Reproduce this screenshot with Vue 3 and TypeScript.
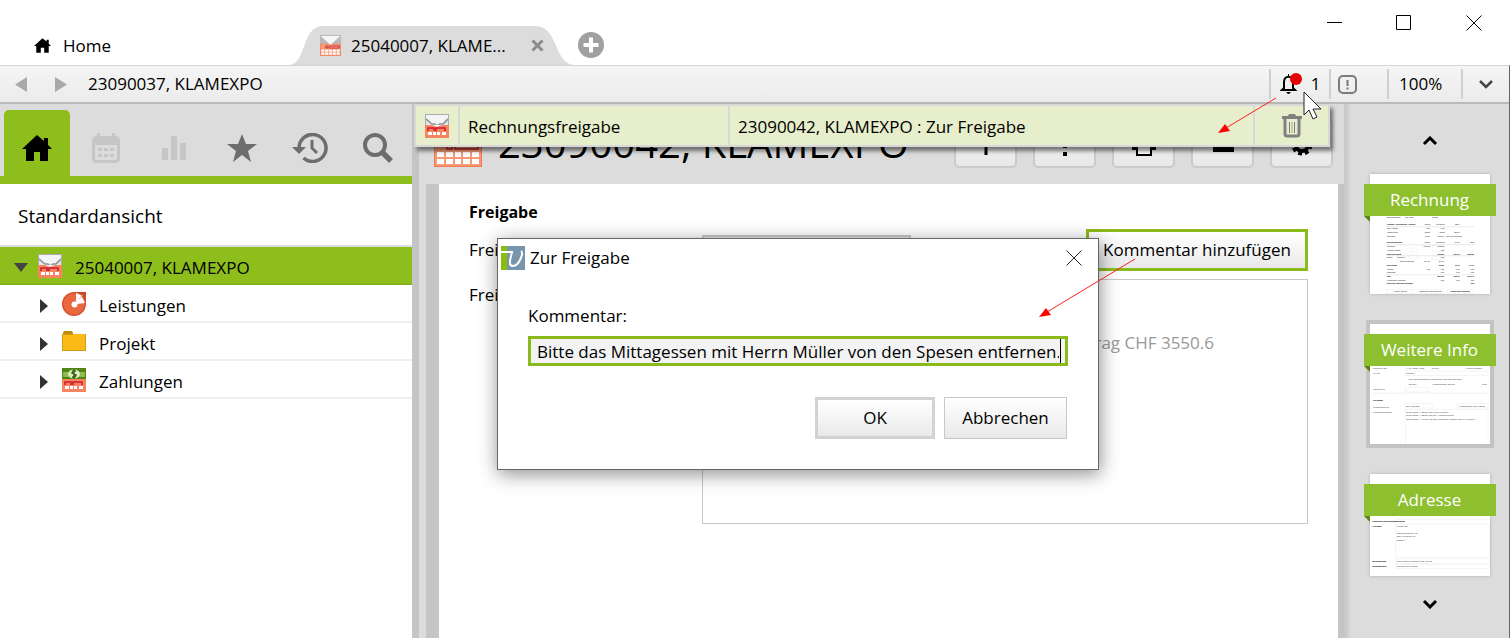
<script setup lang="ts">
import { ref } from 'vue'

interface Mark { x: number; y: number; t: string; b?: boolean; e?: boolean }
interface Thumb { title: string; active?: boolean; cut?: boolean; dense?: boolean; marks: Mark[]; boxes: number[][] }

const comment = ref('Bitte das Mittagessen mit Herrn Müller von den Spesen entfernen.')
const protocol = ref(
  '22.09.2023 11:38:56 (rw) Unterzeichnet\n22.09.2023 11:38:58 (rw) Off. Ausschreibung\n22.09.2023 11:40:36 (rw) [Zur Freigabe]: Totalbetrag CHF 3550.6'
)

const tree = [
  { name: 'Leistungen', icon: 'pie' },
  { name: 'Projekt', icon: 'folder' },
  { name: 'Zahlungen', icon: 'money' },
]

const thumbs: Thumb[] = [
  {
    title: 'Rechnung',
    dense: true,
    marks: [
      { x: 50, y: 133, t: 'Rechnungsdatum' }, { x: 105, y: 133, t: '30.01.2025' }, { x: 186, y: 133, t: 'Periode' },
      { x: 50, y: 154, t: 'Aufwand / Verrechenbar / Honorar', b: true }, { x: 180, y: 154, t: 'Datum', e: true }, { x: 224, y: 154, t: 'Verrechnet', e: true }, { x: 268, y: 154, t: 'Offen', e: true },
      { x: 50, y: 166, t: 'Total Aufwand' }, { x: 180, y: 166, t: '10.00', e: true }, { x: 224, y: 166, t: '10.00', e: true },
      { x: 50, y: 176, t: 'Honorar netto' }, { x: 180, y: 176, t: '300.00', e: true }, { x: 224, y: 176, t: '300.00', e: true }, { x: 268, y: 176, t: '300.00', e: true },
      { x: 50, y: 188, t: 'Noch offen' }, { x: 180, y: 188, t: '770.00', e: true }, { x: 202, y: 188, t: 'Honorar = 100% von Noch offen' },
      { x: 50, y: 208, t: 'Rechnungsbeträge', b: true }, { x: 180, y: 208, t: 'Datum', e: true }, { x: 224, y: 208, t: 'Verrechnet', e: true }, { x: 268, y: 208, t: 'MWST', e: true }, { x: 312, y: 208, t: 'Total', e: true },
      { x: 50, y: 220, t: 'Leistungen' }, { x: 180, y: 220, t: '17650.00', e: true }, { x: 222, y: 220, t: '17650.00', e: true },
      { x: 50, y: 230, t: '% Rabatt   Honorar' }, { x: 222, y: 230, t: '0.00', e: true },
      { x: 50, y: 242, t: 'Total nach Rabatt', b: true }, { x: 222, y: 242, t: '17650.00', b: true, e: true }, { x: 268, y: 242, t: '1359.05', b: true, e: true }, { x: 312, y: 242, t: '19009.05', b: true, e: true },
      { x: 50, y: 253, t: 'Spesen' }, { x: 80, y: 253, t: 'Kontrolle %' }, { x: 222, y: 253, t: '0.00', e: true },
      { x: 90, y: 264, t: 'Belege verwenden' }, { x: 178, y: 264, t: '384.50', e: true }, { x: 222, y: 264, t: '384.50', e: true },
      { x: 50, y: 275, t: 'Total Spesen', b: true }, { x: 222, y: 275, t: '384.50', b: true, e: true }, { x: 268, y: 275, t: '29.60', b: true, e: true }, { x: 312, y: 275, t: '414.10', b: true, e: true },
      { x: 50, y: 287, t: 'Auslagen' }, { x: 180, y: 287, t: '0.00', e: true }, { x: 222, y: 287, t: '0.00', e: true }, { x: 268, y: 287, t: '0.00', e: true }, { x: 312, y: 287, t: '0.00', e: true },
      { x: 50, y: 298, t: 'Vorschüsse' }, { x: 222, y: 298, t: '0.00', e: true }, { x: 268, y: 298, t: '0.00', e: true }, { x: 312, y: 298, t: '0.00', e: true },
      { x: 50, y: 310, t: 'Total', b: true }, { x: 222, y: 310, t: '18034.50', b: true, e: true }, { x: 268, y: 310, t: '1388.65', b: true, e: true }, { x: 312, y: 310, t: '19423.15', b: true, e: true },
      { x: 50, y: 321, t: '% Rückbehalt Vorschuss' }, { x: 222, y: 321, t: '0.00', e: true }, { x: 268, y: 321, t: '0.00', e: true }, { x: 312, y: 321, t: '0.00', e: true },
      { x: 50, y: 331, t: 'Total nach Abschluss (gerundet)', b: true }, { x: 312, y: 331, t: '0.00', b: true, e: true },
      { x: 72, y: 355, t: 'Manuell drucken' }, { x: 148, y: 355, t: 'Empfänger/Anteile einstellen' }, { x: 240, y: 355, t: 'Ausstehende Zahlungen', b: true },
    ],
    boxes: [[50, 158, 262, 1], [50, 212, 262, 1], [50, 245, 262, 1], [50, 302, 262, 1], [50, 347, 80, 12], [141, 347, 80, 12], [231, 347, 80, 12], [120, 222, 22, 10], [186, 214, 38, 18], [120, 245, 22, 10], [186, 246, 38, 10]],
  },
  {
    title: 'Weitere Info',
    active: true,
    marks: [
      { x: 9, y: 136, t: 'Gedruckt am' }, { x: 108, y: 136, t: '14.01.2025 13:36' }, { x: 186, y: 136, t: 'Durch' }, { x: 286, y: 136, t: 'Werner Schmid' },
      { x: 9, y: 151, t: 'MWST' }, { x: 108, y: 151, t: 'Normal' },
      { x: 116, y: 168, t: 'Exklusive Rechnung (kann nicht gebucht werden)' },
      { x: 116, y: 184, t: 'Bezahlt' }, { x: 186, y: 184, t: 'Ausstehender Betrag' }, { x: 350, y: 184, t: '0.00', e: true },
      { x: 9, y: 199, t: 'Mahnstufe' },
      { x: 9, y: 232, t: 'Freigabe', b: true },
      { x: 9, y: 251, t: 'Freigabestatus' }, { x: 108, y: 250, t: 'Zur Freigabe' }, { x: 268, y: 250, t: 'Kommentar hinzufügen' },
      { x: 9, y: 268, t: 'Freigabeprotokoll' }, { x: 108, y: 267, t: '22.09.2023 11:38:56 (rw) Unterzeichnet' },
      { x: 108, y: 277, t: '22.09.2023 11:38:58 (rw) Off. Ausschreibung' }, { x: 108, y: 287, t: '22.09.2023 11:40:36 (rw) [Zur Freigabe]: Totalbetrag CHF 3550.6' },
    ],
    boxes: [[106, 141, 248, 13], [106, 191, 70, 13], [9, 207, 345, 2], [106, 238, 84, 14], [262, 238, 92, 14], [106, 257, 248, 110]],
  },
  {
    title: 'Adresse',
    cut: true,
    marks: [
      { x: 7, y: 145, t: 'Effektive Rechnungsadresse', b: true },
      { x: 7, y: 160, t: 'Adresse', b: true }, { x: 80, y: 160, t: 'Klamexpo' },
      { x: 80, y: 180, t: 'Schaffhauserstr. 35' }, { x: 80, y: 190, t: '8021 Neustadt SH' }, { x: 80, y: 200, t: 'Schweiz' },
      { x: 7, y: 264, t: 'Briefanrede', b: true }, { x: 80, y: 264, t: 'Sehr geehrte Damen und Herren' },
      { x: 7, y: 280, t: 'Grussformel', b: true }, { x: 80, y: 280, t: 'Freundliche Grüsse' },
    ],
    boxes: [[76, 136, 282, 1], [76, 150, 282, 101], [76, 255, 282, 13], [76, 271, 282, 12]],
  },
]
</script>

<template>
  <div class="window">
    <!-- shared icon shapes -->
    <svg class="defs" aria-hidden="true">
      <defs>
        <linearGradient id="silver" x1="0" y1="0" x2="0" y2="1">
          <stop offset="0" stop-color="#b9bcc0" /><stop offset="1" stop-color="#f0f0f2" />
        </linearGradient>
        <symbol id="house" viewBox="0 0 30 26">
          <path d="M15 0 22 6V3h4v7l4 4h-4v12h-8v-9h-6v9H4V14H0z" />
        </symbol>
        <symbol id="invoice" viewBox="0 0 24 24">
          <rect width="24" height="12" fill="url(#silver)" />
          <path d="M1 4l8 7h6l8-7V1H1z" fill="#f4f4f6" />
          <path d="M1 5l6 5h3l2 2 3-2h3l5-5" fill="none" stroke="#909498" stroke-width="1.600" />
          <path d="M.5 12V.5h23V12" fill="none" stroke="#aaadb0" />
          <rect y="11" width="24" height="13" fill="#f58560" />
          <path d="M7 11h10l-5 2z" fill="#f4f4f6" />
          <path d="M3 17v-3h6v3M11 17v-3h9v3" fill="none" stroke="#d01b2e" stroke-width="1.600" />
          <path d="M3 18h4v3H3zM8 18h3v3H8zM12 18h3v3h-3zM17 18h4v3h-4z" fill="#fff" />
        </symbol>
        <symbol id="calc" viewBox="0 0 48 48">
          <rect width="48" height="24" fill="#b8babd" />
          <rect y="20" width="48" height="28" fill="#f2784e" /><rect x="1" y="21" width="46" height="26" fill="#f59a75" />
          <path d="M2 2h44L24 23z" fill="#f7f7f7" />
          <path d="M13 25h5v5h-5zM21 25h23v5H21z" fill="#ef8f79" stroke="#c8202f" stroke-width="1.600" />
          <path d="M3 33h7v5H3zM12 33h7v5h-7zM21 33h6v5h-6zM29 33h7v5h-7zM38 33h7v5h-7zM3 40h7v5H3zM12 40h7v5h-7zM21 40h6v5h-6zM29 40h7v5h-7zM38 40h7v5h-7z" fill="#fff" />
        </symbol>
        <symbol id="pie" viewBox="0 0 24 24">
          <path d="M12 0h12v12z" fill="#c94a28" />
          <circle cx="12" cy="12" r="12" fill="#d9532f" /><circle cx="12" cy="12" r="10.500" fill="#e9683f" />
          <path d="M14 1l5 2 4 8-8 1-1-3z" fill="#fff" /><path d="M17 7l4-4" stroke="#e9a48e" />
          <circle cx="12.500" cy="12.500" r="3" fill="#fff" />
        </symbol>
        <symbol id="folder" viewBox="0 0 24 24">
          <path d="M1 3l1-2h8l1 2v4H1z" fill="#c18a12" /><path d="M0 4h24v17H0z" fill="#d39a14" />
          <path d="M1 5h9l2-1h11v16H1z" fill="#fbbb17" />
        </symbol>
        <symbol id="money" viewBox="0 0 24 24">
          <rect width="24" height="12" fill="#4f8512" /><path d="M1 4h22v5H1z" fill="#91bb4f" />
          <ellipse cx="12" cy="6" rx="6" ry="4.500" fill="#dcebc2" />
          <path d="M14 3h-3l-1 2 4 2-1 2h-3M12 1v10" fill="none" stroke="#37640c" stroke-width="1.500" />
          <rect y="11" width="24" height="13" fill="#f58560" />
          <path d="M3 17v-3h6v3M11 17v-3h9v3" fill="none" stroke="#d01b2e" stroke-width="1.600" />
          <path d="M3 18h4v3H3zM8 18h3v3H8zM12 18h3v3h-3zM17 18h4v3h-4z" fill="#fff" />
        </symbol>
      </defs>
    </svg>

    <header class="tabs">
      <button class="tab home"><svg width="17" height="15"><use href="#house" /></svg>Home</button>
      <div class="tab current">
        <svg class="shape" width="285" height="39" viewBox="0 0 285 39" aria-hidden="true">
          <path d="M0 39C18 38 12 0 34 0H246C270 0 264 37 285 39z" fill="#dcdcdc" />
        </svg>
        <svg width="21" height="21"><use href="#calc" /></svg>
        <span class="tab-name">25040007, KLAME...</span>
        <button class="bare" aria-label="Tab schliessen">
          <svg width="13" height="13" viewBox="0 0 13 13"><path d="M1.500 1.500l10 10M11.500 1.500l-10 10" stroke="#8b8b8b" stroke-width="3" /></svg>
        </button>
      </div>
      <button class="bare add" aria-label="Neuer Tab">
        <svg width="26" height="26"><circle cx="13" cy="13" r="13" fill="#a0a0a0" /><path d="M13 5.500v15M5.500 13h15" stroke="#fff" stroke-width="4" /></svg>
      </button>
      <div class="win-buttons">
        <button class="bare" aria-label="Minimieren"><svg width="16" height="16"><path d="M1 7.500h15" stroke="#000" /></svg></button>
        <button class="bare" aria-label="Maximieren"><svg width="16" height="16"><path d="M.5.5h14v14H.5z" fill="none" stroke="#000" /></svg></button>
        <button class="bare" aria-label="Schliessen"><svg width="16" height="16"><path d="M.5.5l15 15M15.500.5l-15 15" stroke="#000" /></svg></button>
      </div>
    </header>

    <div class="frame">
      <nav class="toolbar">
        <button class="bare back" aria-label="Zurück"><svg width="12" height="15"><path d="M12 0v15L0 7.500z" fill="#a9a9a9" /></svg></button>
        <button class="bare forward" aria-label="Vorwärts"><svg width="12" height="15"><path d="M0 0v15l12-7.500z" fill="#a9a9a9" /></svg></button>
        <span class="path">23090037, KLAMEXPO</span>
        <button class="tool bell">
          <svg width="22" height="22" viewBox="0 0 22 22">
            <path d="M8 2h1M4 15V9c0-7 9-7 9 0v6l2 2H2z" fill="none" stroke="#000" stroke-width="2" /><path d="M6 19h5l-2 2H8z" />
            <circle cx="16" cy="6" r="6" fill="#e80000" />
          </svg>1
        </button>
        <button class="tool alert" aria-label="Hinweise">
          <svg width="20" height="19"><rect x="1" y="1" width="17" height="17" rx="4" fill="none" stroke="#7b7b7b" stroke-width="2" /><path d="M9.500 5v6M9.500 12.500v2" stroke="#777" stroke-width="2" /></svg>
        </button>
        <button class="tool zoom">100%</button>
        <button class="tool more" aria-label="Mehr"><svg width="14" height="10"><path d="M1 2l6 6 6-6" fill="none" stroke="#444" stroke-width="2.500" /></svg></button>
      </nav>

      <div class="body">
        <aside class="side">
          <div class="side-tabs">
            <button class="side-tab on" aria-label="Start"><svg width="30" height="26"><use href="#house" /></svg></button>
            <button class="side-tab" aria-label="Kalender">
              <svg width="28" height="30"><rect x="1.500" y="4.500" width="25" height="24" rx="3" fill="none" stroke="#c6c6c6" stroke-width="3" /><path d="M1 4h26v8H1zM5 0h3v5H5zM20 0h3v5h-3zM6 15h4v3H6zM12 15h4v3h-4zM18 15h4v3h-4zM6 21h4v3H6zM12 21h4v3h-4zM18 21h4v3h-4z" fill="#c6c6c6" /></svg>
            </button>
            <button class="side-tab" aria-label="Auswertungen"><svg width="24" height="24"><path d="M0 12h6v12H0zM9 0h6v24H9zM18 7h6v17h-6z" fill="#c6c6c6" /></svg></button>
            <button class="side-tab" aria-label="Favoriten"><svg width="30" height="28" viewBox="0 0 30 28"><path d="M15 0l4 10h11l-9 7 3 11-9-7-9 7 3-11-9-7h11z" fill="#6d6d6d" /></svg></button>
            <button class="side-tab" aria-label="Verlauf">
              <svg width="36" height="30" viewBox="0 0 36 30"><path d="M7 15a13.500 13.500 0 1 1 4.500 10" fill="none" stroke="#6d6d6d" stroke-width="3.500" /><path d="M0 14h14l-7 7z" fill="#6d6d6d" /><path d="M20 7v8l5 5" fill="none" stroke="#6d6d6d" stroke-width="3" /></svg>
            </button>
            <button class="side-tab" aria-label="Suchen"><svg width="32" height="30"><circle cx="13" cy="12" r="10" fill="none" stroke="#6d6d6d" stroke-width="4" /><path d="M20 19l9 9" stroke="#6d6d6d" stroke-width="5.500" /></svg></button>
          </div>
          <h2 class="side-head">Standardansicht</h2>
          <ul class="tree">
            <li><button class="node root"><svg class="caret" width="14" height="13"><path d="M0 4h14l-7 9z" fill="#444" /></svg><svg width="24" height="24"><use href="#invoice" /></svg><span class="node-name">25040007, KLAMEXPO</span></button></li>
            <li v-for="n in tree" :key="n.name">
              <button class="node"><svg class="caret" width="9" height="18"><path d="M0 4v14l8-7z" fill="#333" /></svg><svg width="24" height="24"><use :href="'#' + n.icon" /></svg><span class="node-name">{{ n.name }}</span></button>
            </li>
          </ul>
        </aside>

        <div class="splitter"></div>

        <main class="main">
          <div class="title-row">
            <svg width="48" height="48"><use href="#calc" /></svg>
            <h1 class="title">23090042, KLAMEXPO</h1>
            <button class="action" aria-label="Neu"><svg width="28" height="28"><path d="M14 2v24M2 14h24" stroke="#000" stroke-width="3" /></svg></button>
            <button class="action" aria-label="Optionen"><svg width="28" height="28"><path d="M12 5h4v4h-4zM12 14h4v5h-4zM12 23h4v4h-4z" /></svg></button>
            <button class="action" aria-label="Drucken"><svg width="28" height="28"><path d="M2 8h24v13H2z" /><path d="M7 16h14v10H7z" fill="#fff" stroke="#000" stroke-width="2" /></svg></button>
            <button class="action" aria-label="Sperren"><svg width="28" height="28"><path d="M4 10h21v13H4z" /></svg></button>
            <button class="action" aria-label="Einstellungen"><svg width="28" height="28"><circle cx="14" cy="16" r="6" fill="none" stroke="#000" stroke-width="4" /><circle cx="14" cy="16" r="9" fill="none" stroke="#000" stroke-width="3" stroke-dasharray="4 3" /></svg></button>
          </div>
          <form class="sheet" @submit.prevent>
            <h3 class="section">Freigabe</h3>
            <label class="lab" for="status">Freigabestatus</label>
            <div class="fields">
              <select id="status" class="status"><option>Zur Freigabe</option></select>
              <button type="button" class="add-comment">Kommentar hinzufügen</button>
            </div>
            <label class="lab top" for="protocol">Freigabeprotokoll</label>
            <textarea id="protocol" v-model="protocol" class="protocol" readonly></textarea>
          </form>
        </main>

        <div class="splitter right"></div>

        <nav class="pages">
          <button class="bare" aria-label="Nach oben"><svg width="16" height="10"><path d="M2 8l6-6 6 6" fill="none" stroke="#000" stroke-width="3" /></svg></button>
          <div class="list">
            <button v-for="t in thumbs" :key="t.title" class="thumb" :class="{ active: t.active, cut: t.cut }">
              <span class="ribbon">{{ t.title }}</span>
              <svg class="mini" :class="{ dense: t.dense }" viewBox="0 0 360 360" preserveAspectRatio="xMidYMin slice" aria-hidden="true">
                <rect v-for="(b, i) in t.boxes" :key="'b' + i" :x="b[0]" :y="b[1]" :width="b[2]" :height="b[3]" class="mini-box" />
                <text v-for="(m, i) in t.marks" :key="i" :x="m.x" :y="m.y" :class="{ strong: m.b, end: m.e }">{{ m.t }}</text>
              </svg>
            </button>
          </div>
          <button class="bare" aria-label="Nach unten"><svg width="16" height="10"><path d="M2 2l6 6 6-6" fill="none" stroke="#000" stroke-width="3" /></svg></button>
        </nav>
      </div>
    </div>

    <section class="notice" aria-label="Benachrichtigung">
      <span class="cell pic"><svg width="24" height="24"><use href="#invoice" /></svg></span>
      <span class="cell kind">Rechnungsfreigabe</span>
      <span class="cell what">23090042, KLAMEXPO : Zur Freigabe</span>
      <button class="cell trash" aria-label="Löschen">
        <svg width="20" height="24"><path d="M0 2h6l1-2h6l1 2h6v3H0z" fill="#808080" /><path d="M3 5v15q0 2 2 2h10q2 0 2-2V5" fill="none" stroke="#808080" stroke-width="3" /><path d="M7.500 8v11M12.500 8v11" stroke="#808080" /><path d="M10 8v11" stroke="#a8ac98" /></svg>
      </button>
    </section>

    <section class="dialog" role="dialog" aria-labelledby="dlg-title">
      <div class="dlg-bar">
        <svg width="24" height="24"><rect width="24" height="24" fill="#7795ad" /><rect width="6" height="24" fill="#8bbd0c" /><path d="M0 6h11c-2 8-4 14 1 14 6 0 11-13 8-15" fill="none" stroke="#fff" stroke-width="2" /></svg>
        <h2 id="dlg-title">Zur Freigabe</h2>
        <button class="bare" aria-label="Dialog schliessen"><svg width="16" height="16"><path d="M.5.5l15 15M15.500.5l-15 15" stroke="#222" /></svg></button>
      </div>
      <form class="dlg-body" @submit.prevent>
        <label for="comment">Kommentar:</label>
        <div class="entry"><input id="comment" v-model="comment" type="text" /><i class="cursor"></i></div>
        <div class="dlg-buttons">
          <button class="ok">OK</button>
          <button type="button" class="cancel">Abbrechen</button>
        </div>
      </form>
    </section>

    <svg class="pointer notice-arrow" width="60" height="38"><path d="M58 1L8 31" stroke="#f22" /><path d="M0 36l7-9 5 7z" fill="#f00" /></svg>
    <svg class="pointer comment-arrow" width="98" height="60"><path d="M96 1L8 54" stroke="#f22" /><path d="M0 59l7-9 5 7z" fill="#f00" /></svg>
    <svg class="pointer mouse" width="20" height="30" viewBox="0 0 20 30"><path d="M1 1v23l5-5 4 9 4-2-4-8h8z" fill="#fff" stroke="#223" /></svg>
  </div>
</template>

<style>
body { background: #fff; }
</style>

<style scoped>
* { box-sizing: border-box; }
.window {
  position: relative; display: flex; flex-direction: column; height: 100vh; overflow: hidden;
  font: 17px/24px "Open Sans", "Noto Sans", sans-serif; color: #000; background: #fff;
}
.defs { position: absolute; width: 0; height: 0; }
svg { display: block; flex: none; }
h1, h2, h3, ul { margin: 0; padding: 0; font-weight: 400; list-style: none; }
button, input, select, textarea { font: inherit; color: inherit; margin: 0; border-radius: 0; }
.bare { padding: 0; border: 0; background: none; }

.tabs { display: flex; height: 65px; flex: none; align-items: flex-end; }
.tab { display: flex; align-items: center; height: 39px; padding: 0; border: 0; background: none; }
.home { width: 289px; padding-left: 34px; gap: 12px; }
.current { position: relative; width: 285px; padding: 0 30px 0 31px; gap: 10px; }
.current > * { position: relative; }
.current .shape { position: absolute; left: 0; top: 0; }
.tab-name { flex: 1; white-space: nowrap; }
.add { align-self: center; margin: 24px 0 0 4px; }
.win-buttons { display: flex; gap: 54px; margin-left: auto; align-self: flex-start; padding: 15px 30px 0 0; }

.frame { flex: 1; min-height: 0; display: flex; flex-direction: column; margin-right: 2px; border-top: 1px solid #d6d6d6; border-right: 1px solid #58666e; }
.toolbar { display: flex; flex: none; align-items: center; height: 38px; padding-left: 15px; background: linear-gradient(#f5f5f5, #ebebeb); border-bottom: 2px solid #b9b9b9; }
.forward { margin-left: 28px; }
.path { margin-left: 21px; flex: 1; }
.tool { height: 30px; display: flex; align-items: center; justify-content: center; padding: 0; border: 0; border-left: 2px solid #cfcfcf; background: none; }
.bell { width: 60px; gap: 9px; }
.alert { width: 58px; justify-content: flex-start; padding-left: 7px; }
.zoom { width: 74px; justify-content: flex-start; padding-left: 10px; }
.more { width: 48px; }

.body { flex: 1; min-height: 0; display: flex; background: #dcdcdc; }
.side { width: 412px; flex: none; background: #fff; }
.side-tabs { display: flex; height: 80px; padding: 6px 0 0 4px; gap: 2px; background: #dcdcdc; border-bottom: 8px solid #8ebe1c; }
.side-tab { width: 66px; height: 66px; padding: 10px 0 0; display: flex; align-items: center; justify-content: center; border: 0; background: none; }
.side-tab.on { margin-right: 1px; background: #8ebe1c; border-radius: 5px 5px 0 0; }
.side-head { height: 63px; padding: 20px 18px 0; font-size: 19px; border-bottom: 2px solid #dcdcdc; }
.node { display: flex; align-items: center; gap: 13px; width: 100%; height: 38px; padding: 1px 0 0 40px; border: 0; border-bottom: 2px solid #eee; background: #fff; text-align: left; }
.node-name { padding-top: 4px; }
.root { padding-left: 14px; background: #8ebe1c; border-color: #86b319; }
.root .caret { margin-right: -3px; }

.splitter { width: 7px; flex: none; background: #c5c5c5; }
.right { width: 6px; background: linear-gradient(90deg, #c6c6c6, #d6d6d6); }

.main { flex: 1; min-width: 0; display: flex; flex-direction: column; padding: 0 0 0 7px; }
.title-row { display: flex; align-items: center; height: 80px; flex: none; gap: 16px; padding: 0 11px 2px 8px; }
.title { flex: 1; font-size: 40px; line-height: 56px; white-space: nowrap; }
.action { width: 63px; height: 50px; padding: 0; display: flex; align-items: center; justify-content: center; border: 2px solid #cacaca; border-radius: 5px; background: linear-gradient(#f8f8f8, #e8e8e8); }
.sheet { flex: 1; display: grid; grid-template-columns: 233px 1fr; grid-template-rows: 33px 42px 1fr; row-gap: 8px; padding: 4px 30px 0; border-left: 13px solid #c5c5c5; border-right: 6px solid #c5c5c5; background: #fff; }
.section { grid-column: 1 / 3; font-size: 16px; font-weight: 700; line-height: 48px; }
.lab { padding-top: 9px; }
.top { padding-top: 4px; }
.fields { display: flex; justify-content: space-between; align-items: flex-start; }
.status { width: 209px; height: 33px; margin-top: 6px; border: 2px solid #c8c8c8; background: #ececec; }
.add-comment { height: 42px; width: 222px; padding: 0; border: 3px solid #8bbb1a; background: linear-gradient(#fff, #e9e9e9); }
.protocol { height: 245px; width: 100%; resize: none; padding: 8px 9px; line-height: 22px; color: #999; border: 1px solid #c8c8c8; background: #fff; white-space: pre; overflow: hidden; outline: 0; }

.pages { width: 159px; flex: none; display: flex; flex-direction: column; align-items: center; padding-top: 32px; }
.list { display: flex; flex-direction: column; gap: 30px; margin: 28px 0 23px; }
.thumb { position: relative; width: 120px; height: 120px; padding: 0; border: 0; background: #fff; box-shadow: 0 0 3px #aaa; }
.thumb.active { box-shadow: 0 0 0 4px #c3c3c3; outline: 1px solid #c3c3c3; }
.thumb.cut { height: 102px; }
.ribbon { position: absolute; left: -6px; right: -6px; top: 10px; height: 32px; background: #8dbf2e; color: #fff; font-size: 17px; line-height: 32px; }
.ribbon::after { content: ""; position: absolute; left: 0; top: 32px; border: 3px solid transparent; border-top-color: #5b8410; border-right-color: #5b8410; }
.mini { width: 100%; height: 100%; }
.mini text { font-size: 7px; fill: #333; }
.dense text { font-size: 5px; fill: #000; }
.mini .strong { font-weight: 700; fill: #000; }
.mini .end { text-anchor: end; }
.mini-box { fill: none; stroke: #e0e0e0; }

.notice { position: absolute; left: 414px; right: 182px; top: 104px; height: 43px; display: flex; border: 2px solid #d8d8d8; background: #e7eecb; box-shadow: 3px 4px 4px rgba(0, 0, 0, .5); }
.cell { display: flex; align-items: center; padding: 2px 8px 0; border: 0; border-right: 2px solid #d8d8d8; background: none; white-space: nowrap; }
.pic { width: 44px; padding: 0 9px; }
.kind { width: 270px; }
.what { flex: 1; }
.trash { width: 73px; padding-top: 0; border-right: 0; justify-content: center; }

.dialog { position: absolute; left: 497px; top: 238px; width: 602px; border: 1px solid #666; background: #fff; box-shadow: 1px 4px 18px rgba(0, 0, 0, .45); }
.dlg-bar { display: flex; align-items: center; height: 37px; gap: 5px; padding: 0 16px 0 3px; }
.dlg-bar h2 { flex: 1; font-size: 17px; }
.dlg-body { padding: 28px 30px 30px; }
.entry { position: relative; margin: 8px 0 31px; }
.entry input { display: block; width: 100%; height: 30px; padding: 0 6px; border: 3px solid #8bbb1a; background: #f3f3f3; outline: 0; }
.cursor { position: absolute; right: 7px; top: 3px; width: 1px; height: 24px; background: #000; }
.dlg-buttons { display: flex; justify-content: flex-end; gap: 9px; padding-right: 1px; }
.dlg-buttons button { height: 42px; padding: 0; background: linear-gradient(#fff, #e9e9e9); }
.dlg-buttons .ok { width: 120px; border: 3px solid #d2d2d2; }
.dlg-buttons .cancel { width: 123px; border: 1px solid #c8c8c8; }

.pointer { position: absolute; pointer-events: none; }
.notice-arrow { left: 1218px; top: 97px; }
.comment-arrow { left: 1039px; top: 258px; }
.mouse { left: 1303px; top: 91px; }
</style>
